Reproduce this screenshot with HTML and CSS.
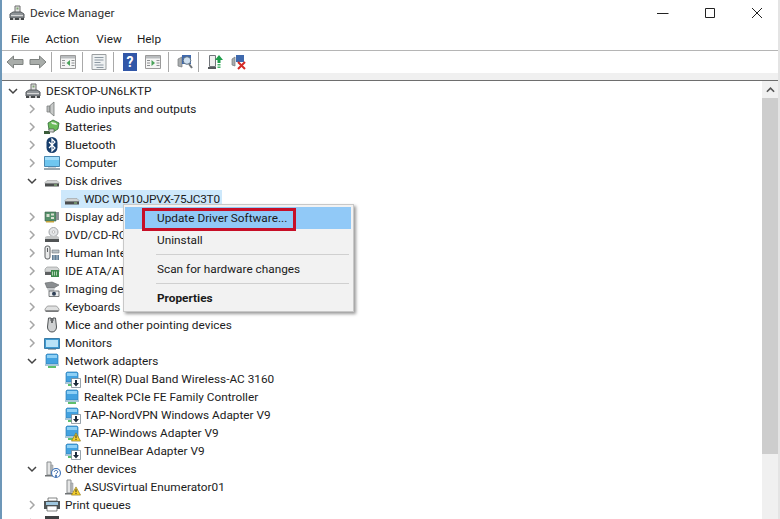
FILE: index.html
```html
<!DOCTYPE html>
<html lang="en">
<head>
<meta charset="utf-8">
<title>Device Manager</title>
<link rel="stylesheet" href="styles.css">
</head>
<body>
<svg class="sprite" width="0" height="0">
  <defs>
    <symbol id="pc" viewBox="0 0 16 16">
      <path d="M6 1h5v7H6z" fill="#e4e4e4" stroke="#6d6d6d"/><path d="M7.500 2.500h2v2h-2z" fill="#7da36f"/>
      <path d="M1 9l3-2h8l3 2v4H1z" fill="#8f9498" stroke="#55595c"/><path d="M2 10h12v1H2z" fill="#d8d8d8"/><path d="M1 13h14v2H1z" fill="#45484a"/><path d="M4 13h2v2H4zM10 13h2v2h-2z" fill="#c8c8c8"/>
    </symbol>
    <symbol id="back" viewBox="0 0 18 14">
      <path d="M1 7l6.500-6v3.500H17v5H7.500V13z" fill="#a9adaa" stroke="#7d817f"/>
    </symbol>
    <symbol id="fwd" viewBox="0 0 18 14">
      <path d="M17 7l-6.500-6v3.500H1v5h9.500V13z" fill="#a9adaa" stroke="#7d817f"/>
    </symbol>
    <symbol id="panel-l" viewBox="0 0 16 14">
      <path d="M.5.500h15v13H.5z" fill="#f5f5f5" stroke="#9a9a9a"/><path d="M1 1h14v2.500H1z" fill="#b9bcbe"/><path d="M2 5h3v1H2zM2 7.500h3v1H2zM2 10h3v1H2zM11.500 5h3v1h-3zM11.500 7.500h3v1h-3zM11.500 10h3v1h-3z" fill="#8d9092"/><path d="M10 5v6L6.500 8z" fill="#4aa35a"/>
    </symbol>
    <symbol id="panel-r" viewBox="0 0 16 14">
      <path d="M.5.500h15v13H.5z" fill="#f5f5f5" stroke="#9a9a9a"/><path d="M1 1h14v2.500H1z" fill="#b9bcbe"/><path d="M2 5h3v1H2zM2 7.500h3v1H2zM2 10h3v1H2zM11.500 5h3v1h-3zM11.500 7.500h3v1h-3zM11.500 10h3v1h-3z" fill="#8d9092"/><path d="M6.500 5v6L10 8z" fill="#4aa35a"/>
    </symbol>
    <symbol id="sheet" viewBox="0 0 15 16">
      <path d="M.5.500h14v15H.5z" fill="#eef1f2" stroke="#9b9fa1"/><path d="M3 3h9v1H3zM3 5.500h9v1H3zM3 8h6v1H3zM3 10.500h9v1H3zM5 13h7v1H5z" fill="#8d99a3"/>
    </symbol>
    <symbol id="scan" viewBox="0 0 16 16">
      <path d="M1 5l4-2v10l-4-1z" fill="#a8acae" stroke="#75797b" stroke-width=".7"/><path d="M5 1h9v9H5z" fill="#3f69ad"/><circle cx="10" cy="6.500" r="3.800" fill="#cfe0f0" stroke="#5a6f85"/><path d="M12 10l3 4" stroke="#6e7377" stroke-width="2"/>
    </symbol>
    <symbol id="update" viewBox="0 0 16 16">
      <path d="M2.500 1.500h6v11h-6z" fill="#f0f0f0" stroke="#71757a"/><path d="M1 13h8v2H1z" fill="#55595c"/><path d="M12 1l4 5h-2.500v3h-3V6H8z" fill="#1f9e4b"/><path d="M10.500 10h3v1.500h-3zM10.500 12.500h3V14h-3z" fill="#46b36b"/>
    </symbol>
    <symbol id="remove" viewBox="0 0 16 16">
      <path d="M1 5l3-2v9l-3-1z" fill="#a8acae" stroke="#75797b" stroke-width=".7"/><path d="M5 1h8v7H5z" fill="#3f69ad"/><path d="M7 8l7 7M14 8l-7 7" stroke="#d42a26" stroke-width="2"/>
    </symbol>
    <symbol id="audio" viewBox="0 0 16 16">
      <path d="M3 5h3v6H3z" fill="#b9bcbc" stroke="#7e8281" stroke-width=".8"/><path d="M6 4.500l4-3.500v14l-4-3.500z" fill="#c7c9c8" stroke="#757977" stroke-width=".8"/>
    </symbol>
    <symbol id="battery" viewBox="0 0 16 16">
      <path d="M4 4l5-3 6 3-1 6-5 3-4-2z" fill="#6bbb5a" stroke="#2f6a35" stroke-width=".8"/><path d="M7 3l5 1 1 2-5-1z" fill="#e8f2e4"/><path d="M0 12h6v3H0z" fill="#3a5c3a"/><path d="M5 10h5v3H5z" fill="#cfd3cf" stroke="#444" stroke-width=".6"/>
    </symbol>
    <symbol id="bt" viewBox="0 0 16 16">
      <rect x="2.500" y="0" width="11" height="16" rx="5.500" fill="#163d6b"/><path d="M5 5l6 6-3 3V2l3 3-6 6" fill="none" stroke="#fff" stroke-width="1.200"/>
    </symbol>
    <symbol id="computer" viewBox="0 0 16 16">
      <path d="M.5 1.500h15v10H.5z" fill="#6fc6ef" stroke="#4a88b0"/><path d="M1 2h14v3H1z" fill="#a4defa"/><path d="M0 13h16v2H0z" fill="#9aa7af"/><path d="M4 12h8v1H4z" fill="#c9d1d6"/>
    </symbol>
    <symbol id="disk" viewBox="0 0 16 16">
      <path d="M1 9.500l2-2h10l2 2v1H1z" fill="#d1d3d3" stroke="#9a9c9c" stroke-width=".6"/><path d="M1 10.500h14v3H1z" fill="#4b4d4e"/><path d="M10 11.500h3v1h-3z" fill="#9bd58a"/>
    </symbol>
    <symbol id="display" viewBox="0 0 16 16">
      <path d="M1 3h11v9H1z" fill="#55906a" stroke="#3d5a46" stroke-width=".6"/><path d="M2.500 5h3v3h-3zM7 4.500h3v2H7zM7 8h3v2H7z" fill="#d9dfd1"/><path d="M12 3h3v8h-3z" fill="#8c9196"/><path d="M2 12h8v1.500H2z" fill="#c2a23b"/>
    </symbol>
    <symbol id="dvd" viewBox="0 0 16 16">
      <circle cx="9.500" cy="5" r="4.500" fill="#e3e5e7" stroke="#a0a3a6"/><circle cx="9.500" cy="5" r="1.300" fill="#fff" stroke="#9a9a9a" stroke-width=".6"/><path d="M1 10l2-1h10l2 1v2H1z" fill="#c4c6c6"/><path d="M1 12h14v3H1z" fill="#505354"/>
    </symbol>
    <symbol id="hid" viewBox="0 0 16 16">
      <rect x="1" y="1" width="5" height="13" rx="2" fill="#e9eaea" stroke="#5c5f61"/><path d="M3 3h1v4H3z" fill="#5c5f61"/><path d="M8 5h7v3H8z" fill="#b8c1c7" stroke="#6e757a" stroke-width=".6"/><path d="M8 10h7v5H8z" fill="#5f7d96"/><path d="M10 10v5M13 10v5" stroke="#cfd8de" stroke-width=".8"/>
    </symbol>
    <symbol id="ide" viewBox="0 0 16 16">
      <path d="M1 6l2-2h10l2 2v3H1z" fill="#d3d5d5" stroke="#8f9191" stroke-width=".6"/><path d="M1 9h9v3H1z" fill="#5d6061"/><path d="M7 7h8v7H7z" fill="#3e8a4d"/><path d="M8.500 8.500v4M10.500 8.500v4M12.500 8.500v4" stroke="#cfe7cf" stroke-width=".8"/>
    </symbol>
    <symbol id="imaging" viewBox="0 0 16 16">
      <path d="M1 2l7-1 7 3-5 3H3z" fill="#8a8e91" stroke="#5f6365" stroke-width=".6"/><path d="M3 7h8l-1 3H4z" fill="#c6c9cb"/><path d="M5 10h10v5.500H5z" fill="#e8eaeb" stroke="#5b5e60" stroke-width=".8"/><circle cx="10" cy="12.800" r="2" fill="#2f3f55"/>
    </symbol>
    <symbol id="keyboard" viewBox="0 0 16 16">
      <path d="M1 10l2.500-3h9l2.500 3v1.500H1z" fill="#dfe0e0" stroke="#8f9191" stroke-width=".8"/><path d="M1.500 11.500h13v1.500h-13z" fill="#77797a"/>
    </symbol>
    <symbol id="mouse" viewBox="0 0 16 16">
      <path d="M4.500 1h2.500v3h2V1h2.500l1 9c0 3-2 5-4.500 5s-4.500-2-4.500-5z" fill="#cfd1d2" stroke="#4f5355"/><path d="M7 1h2v5H7z" fill="#66696b"/>
    </symbol>
    <symbol id="monitor" viewBox="0 0 16 16">
      <path d="M.5 3.500h15v10H.5z" fill="#3d9ad1" stroke="#3c7ca6"/><path d="M2 5h12v7H2z" fill="#b8e3f8"/><path d="M4 14h8v1H4z" fill="#a3adb2"/>
    </symbol>
    <symbol id="net" viewBox="0 0 16 16">
      <path d="M3 1h10l1 1v9H2V2z" fill="#43a2e0" stroke="#2f7fb5" stroke-width=".7"/><path d="M3 2h10v3H3z" fill="#8ed0f5"/><path d="M1 11h14v2H1z" fill="#a7c6d8"/><path d="M4 13h8v2H4z" fill="#5fbf6d"/>
    </symbol>
    <symbol id="arrow" viewBox="0 0 10 10">
      <path d="M.5.500h9v9h-9z" fill="#fff" stroke="#6d7d88" stroke-width=".7"/><path d="M4 2h2v3h2L5 8.500 2 5h2z" fill="#1e2b3a"/>
    </symbol>
    <symbol id="warn" viewBox="0 0 11 10">
      <path d="M5.500.500l5 9h-10z" fill="#f5cf2e" stroke="#8a7413" stroke-width=".7"/><path d="M5 3.200h1v3.300H5zM5 7.300h1v1H5z" fill="#222"/>
    </symbol>
    <symbol id="unknown" viewBox="0 0 16 16">
      <path d="M3 1h4v13H3z" fill="#e4e5e5" stroke="#8a8e90"/><path d="M7 4h2v9H7z" fill="#b9bcbd" stroke="#8a8e90" stroke-width=".5"/><path d="M1 14h8v1.500H1z" fill="#6f7375"/>
    </symbol>
    <symbol id="qmark" viewBox="0 0 9 9">
      <circle cx="4.500" cy="4.500" r="4" fill="#fff" stroke="#3d72b8"/><path d="M3 3.500c0-1.800 3-1.800 3 0 0 1-1.500 1-1.500 2.200M4 6.700h1v1H4z" fill="none" stroke="#2a5ea3" stroke-width=".9"/>
    </symbol>
    <symbol id="printer" viewBox="0 0 16 16">
      <path d="M4 1h9v3H4z" fill="#fff" stroke="#4e5152" stroke-width=".7"/><path d="M0 4h16v8H0z" fill="#4e5455"/><path d="M2 5h12v3H2z" fill="#9fc7df"/><path d="M3 9h10v5H3z" fill="#fff" stroke="#4e5152" stroke-width=".7"/>
    </symbol>
    <symbol id="cpu" viewBox="0 0 16 16">
      <path d="M1 1h14v14H1z" fill="#3e4042"/><path d="M4 4h8v8H4z" fill="#8c8f91"/>
    </symbol>
  </defs>
</svg>

<div class="window">
  <header class="titlebar">
    <svg class="title-icon"><use href="#pc"/></svg>
    <span class="title-text">Device Manager</span>
    <div class="window-controls">
      <svg class="wc" viewBox="0 0 12 12"><path d="M0 6.500h11.500" stroke="#222" fill="none"/></svg>
      <svg class="wc" viewBox="0 0 12 12"><path d="M1.500 1.500h9v9h-9z" stroke="#222" fill="none"/></svg>
      <svg class="wc" viewBox="0 0 12 12"><path d="M1 1l10 10M11 1L1 11" stroke="#222" fill="none"/></svg>
    </div>
  </header>

  <nav class="menubar">
    <span>File</span><span>Action</span><span>View</span><span>Help</span>
  </nav>

  <div class="toolbar">
    <svg class="tb tb-arrow"><use href="#back"/></svg>
    <svg class="tb tb-arrow"><use href="#fwd"/></svg>
    <i class="tb-sep"></i>
    <svg class="tb"><use href="#panel-l"/></svg>
    <i class="tb-sep"></i>
    <svg class="tb"><use href="#sheet"/></svg>
    <i class="tb-sep"></i>
    <span class="tb tb-help">?</span>
    <svg class="tb tb-panel"><use href="#panel-r"/></svg>
    <i class="tb-sep"></i>
    <svg class="tb tb-scan"><use href="#scan"/></svg>
    <i class="tb-sep"></i>
    <svg class="tb tb-update"><use href="#update"/></svg>
    <svg class="tb"><use href="#remove"/></svg>
  </div>
  <div class="band"></div>

  <main class="content">
    <div class="tree">
      <div class="row d0"><svg class="chev" viewBox="0 0 10 10"><path d="M1 3l4 4 4-4"/></svg><svg class="ico"><use href="#pc"/></svg><span>DESKTOP-UN6LKTP</span></div>
      <div class="row d1"><svg class="chev closed" viewBox="0 0 10 10"><path d="M3 1l4 4-4 4"/></svg><svg class="ico"><use href="#audio"/></svg><span>Audio inputs and outputs</span></div>
      <div class="row d1"><svg class="chev closed" viewBox="0 0 10 10"><path d="M3 1l4 4-4 4"/></svg><svg class="ico"><use href="#battery"/></svg><span>Batteries</span></div>
      <div class="row d1"><svg class="chev closed" viewBox="0 0 10 10"><path d="M3 1l4 4-4 4"/></svg><svg class="ico"><use href="#bt"/></svg><span>Bluetooth</span></div>
      <div class="row d1"><svg class="chev closed" viewBox="0 0 10 10"><path d="M3 1l4 4-4 4"/></svg><svg class="ico"><use href="#computer"/></svg><span>Computer</span></div>
      <div class="row d1"><svg class="chev" viewBox="0 0 10 10"><path d="M1 3l4 4 4-4"/></svg><svg class="ico"><use href="#disk"/></svg><span>Disk drives</span></div>
      <div class="row d2"><div class="sel"><svg class="ico"><use href="#disk"/></svg><span>WDC WD10JPVX-75JC3T0</span></div></div>
      <div class="row d1"><svg class="chev closed" viewBox="0 0 10 10"><path d="M3 1l4 4-4 4"/></svg><svg class="ico"><use href="#display"/></svg><span>Display adapters</span></div>
      <div class="row d1"><svg class="chev closed" viewBox="0 0 10 10"><path d="M3 1l4 4-4 4"/></svg><svg class="ico"><use href="#dvd"/></svg><span>DVD/CD-ROM drives</span></div>
      <div class="row d1"><svg class="chev closed" viewBox="0 0 10 10"><path d="M3 1l4 4-4 4"/></svg><svg class="ico"><use href="#hid"/></svg><span>Human Interface Devices</span></div>
      <div class="row d1"><svg class="chev closed" viewBox="0 0 10 10"><path d="M3 1l4 4-4 4"/></svg><svg class="ico"><use href="#ide"/></svg><span>IDE ATA/ATAPI controllers</span></div>
      <div class="row d1"><svg class="chev closed" viewBox="0 0 10 10"><path d="M3 1l4 4-4 4"/></svg><svg class="ico"><use href="#imaging"/></svg><span>Imaging devices</span></div>
      <div class="row d1"><svg class="chev closed" viewBox="0 0 10 10"><path d="M3 1l4 4-4 4"/></svg><svg class="ico"><use href="#keyboard"/></svg><span>Keyboards</span></div>
      <div class="row d1"><svg class="chev closed" viewBox="0 0 10 10"><path d="M3 1l4 4-4 4"/></svg><svg class="ico"><use href="#mouse"/></svg><span>Mice and other pointing devices</span></div>
      <div class="row d1"><svg class="chev closed" viewBox="0 0 10 10"><path d="M3 1l4 4-4 4"/></svg><svg class="ico"><use href="#monitor"/></svg><span>Monitors</span></div>
      <div class="row d1"><svg class="chev" viewBox="0 0 10 10"><path d="M1 3l4 4 4-4"/></svg><svg class="ico"><use href="#net"/></svg><span>Network adapters</span></div>
      <div class="row d2"><div class="sub"><span class="badged"><svg class="ico"><use href="#net"/></svg><svg class="badge"><use href="#arrow"/></svg></span><span>Intel(R) Dual Band Wireless-AC 3160</span></div></div>
      <div class="row d2"><div class="sub"><span class="badged"><svg class="ico"><use href="#net"/></svg></span><span>Realtek PCIe FE Family Controller</span></div></div>
      <div class="row d2"><div class="sub"><span class="badged"><svg class="ico"><use href="#net"/></svg><svg class="badge"><use href="#arrow"/></svg></span><span>TAP-NordVPN Windows Adapter V9</span></div></div>
      <div class="row d2"><div class="sub"><span class="badged"><svg class="ico"><use href="#net"/></svg><svg class="badge"><use href="#warn"/></svg></span><span>TAP-Windows Adapter V9</span></div></div>
      <div class="row d2"><div class="sub"><span class="badged"><svg class="ico"><use href="#net"/></svg><svg class="badge"><use href="#arrow"/></svg></span><span>TunnelBear Adapter V9</span></div></div>
      <div class="row d1"><svg class="chev" viewBox="0 0 10 10"><path d="M1 3l4 4 4-4"/></svg><span class="badged"><svg class="ico"><use href="#unknown"/></svg><svg class="badge"><use href="#qmark"/></svg></span><span>Other devices</span></div>
      <div class="row d2"><div class="sub"><span class="badged"><svg class="ico"><use href="#unknown"/></svg><svg class="badge"><use href="#warn"/></svg></span><span>ASUSVirtual Enumerator01</span></div></div>
      <div class="row d1"><svg class="chev closed" viewBox="0 0 10 10"><path d="M3 1l4 4-4 4"/></svg><svg class="ico"><use href="#printer"/></svg><span>Print queues</span></div>
      <div class="row d1"><svg class="chev closed" viewBox="0 0 10 10"><path d="M3 1l4 4-4 4"/></svg><svg class="ico"><use href="#cpu"/></svg><span>Processors</span></div>
    </div>
    <div class="scrollbar">
      <div class="sb-up"><svg viewBox="0 0 10 6"><path d="M1 5l4-4 4 4"/></svg></div>
      <div class="sb-thumb"></div>
    </div>
  </main>

  <div class="ctx">
    <div class="ctx-item active">Update Driver Software...</div>
    <div class="ctx-item">Uninstall</div>
    <hr class="ctx-sep">
    <div class="ctx-item">Scan for hardware changes</div>
    <hr class="ctx-sep">
    <div class="ctx-item strong">Properties</div>
    <div class="redbox"></div>
  </div>
</div>
</body>
</html>
```

FILE: styles.css
```css
* { box-sizing: border-box; }
html, body { margin: 0; height: 100%; overflow: hidden; background: #fff; }
body { font: 11.8px/18px Roboto, "Noto Sans", sans-serif; color: #1c1c1c; }
.sprite { position: absolute; }

.window {
  position: relative;
  width: 780px;
  height: 519px;
  display: flex;
  flex-direction: column;
  background: #fff;
  border-left: 2px solid #6d97b8;
  border-right: 2px solid #e4e4e4;
  overflow: hidden;
}

.titlebar { height: 26px; flex: none; display: flex; align-items: center; padding-left: 7px; }
.title-icon { width: 16px; height: 16px; }
.title-text { margin-left: 5px; color: #333; }
.window-controls { margin-left: auto; display: flex; gap: 35px; padding-right: 15px; }
.wc { width: 12px; height: 12px; }

.menubar { height: 25px; flex: none; display: flex; align-items: center; padding: 2px 0 0 9px; border-bottom: 1px solid #b5b5b5; }
.menubar span:nth-child(1) { margin-right: 16px; }
.menubar span:nth-child(2) { margin-right: 17px; }
.menubar span:nth-child(3) { margin-right: 15px; }

.toolbar { height: 22px; flex: none; display: flex; align-items: center; padding-left: 4px; }
.tb { width: 16px; height: 16px; flex: none; margin-right: 6px; }
.tb-arrow { width: 18px; height: 14px; margin-right: 5px; }
.tb-arrow + .tb-sep { margin-left: -1px; }
.tb-panel { margin-right: 7px; }
.tb-scan { margin-right: 5px; }
.tb-update { margin-right: 8px; }
.tb-sep { width: 1px; height: 20px; background: #a9a9a9; margin: 0 8px 0 0; flex: none; }
.tb-help {
  width: 14px; height: 18px; margin-left: 1px; margin-right: 8px;
  background: #3157a8; color: #fff; font-weight: 700; font-size: 14px; line-height: 18px; text-align: center;
}
.band { height: 8px; flex: none; background: #f0f0f0; border-bottom: 1px solid #6e6e6e; }

.content { flex: 1; min-height: 0; display: flex; overflow: hidden; padding-left: 1px; }
.tree { flex: 1; min-width: 0; padding-top: 1px; }
.row { height: 18px; display: flex; align-items: center; white-space: nowrap; }
.ico { width: 16px; height: 16px; flex: none; }
.chev { width: 10px; height: 10px; flex: none; fill: none; stroke: #444; stroke-width: 1.500; }
.chev.closed { stroke: #a6a6a6; }
.row > span:last-child { margin-left: 5px; }
.sub > span:last-child, .sel > span { margin-left: 4px; }

.d0 { padding-left: 5px; }
.d0 .chev { margin-right: 7px; }
.d1 { padding-left: 24px; }
.d1 .chev { margin-right: 7px; }
.d2 { padding-left: 58px; }
.sub, .sel { display: flex; align-items: center; height: 18px; padding-left: 3px; padding-right: 2px; }
.sel { background: #cde8fb; }
.sel > span { letter-spacing: -.2px; }

.badged { position: relative; display: block; width: 16px; height: 16px; flex: none; }
.badged .ico { display: block; }
.badge { position: absolute; right: -1px; bottom: -1px; width: 10px; height: 10px; }

.scrollbar { width: 16px; flex: none; background: #f0f0f0; display: flex; flex-direction: column; }
.sb-up { height: 17px; flex: none; display: flex; align-items: center; justify-content: center; }
.sb-up svg { width: 9px; height: 6px; fill: none; stroke: #555; stroke-width: 1.800; }
.sb-thumb { height: 356px; background: #cdcdcd; flex: none; }

.ctx {
  position: absolute;
  left: 121px;
  top: 204px;
  width: 231px;
  height: 108px;
  padding: 2px 2px 2px 1px;
  background: #f2f2f2;
  border: 1px solid #c8c8c8;
  box-shadow: 2px 2px 3px rgba(0, 0, 0, .4);
}
.ctx-item { height: 22px; line-height: 22px; padding-left: 32px; color: #1a1a1a; }
.ctx-item.active { background: #91c9f7; }
.ctx-item.strong { font-weight: 700; margin-top: 3px; }
.ctx-sep { height: 1px; border: 0; margin: 3px 2px 3px 31px; background: #d0d0d0; }
.redbox { position: absolute; left: 18px; top: 3px; width: 154px; height: 23px; border: 3px solid #c70f27; }
```
